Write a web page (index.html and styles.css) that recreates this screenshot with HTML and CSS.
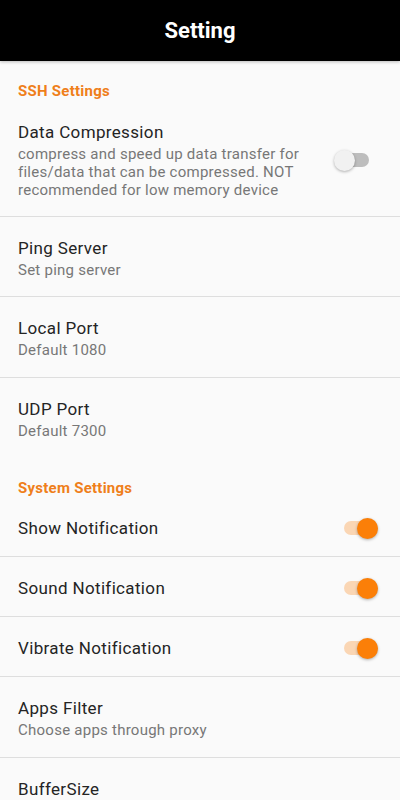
FILE: index.html
```html
<!DOCTYPE html>
<html>
<head>
    <title>Setting</title>
    <link rel="stylesheet" href="styles.css">
</head>
<body>
    <div class="toolbar">Setting</div>

    <div class="section-title first">SSH Settings</div>

    <div class="row divided">
        <div class="text wrap">
            <div class="title">Data Compression</div>
            <div class="summary">compress and speed up data transfer for files/data that can be compressed. NOT recommended for low memory device</div>
        </div>
        <div class="switch off"><span class="thumb"></span></div>
    </div>

    <div class="row divided">
        <div class="text">
            <div class="title">Ping Server</div>
            <div class="summary">Set ping server</div>
        </div>
    </div>

    <div class="row divided tall">
        <div class="text">
            <div class="title">Local Port</div>
            <div class="summary">Default 1080</div>
        </div>
    </div>

    <div class="row">
        <div class="text">
            <div class="title">UDP Port</div>
            <div class="summary">Default 7300</div>
        </div>
    </div>

    <div class="section-title">System Settings</div>

    <div class="row divided">
        <div class="text">
            <div class="title">Show Notification</div>
        </div>
        <div class="switch on"><span class="thumb"></span></div>
    </div>

    <div class="row divided">
        <div class="text">
            <div class="title">Sound Notification</div>
        </div>
        <div class="switch on"><span class="thumb"></span></div>
    </div>

    <div class="row divided">
        <div class="text">
            <div class="title">Vibrate Notification</div>
        </div>
        <div class="switch on"><span class="thumb"></span></div>
    </div>

    <div class="row divided tall">
        <div class="text">
            <div class="title">Apps Filter</div>
            <div class="summary">Choose apps through proxy</div>
        </div>
    </div>

    <div class="row">
        <div class="text">
            <div class="title">BufferSize</div>
        </div>
    </div>
</body>
</html>
```

FILE: styles.css
```css
body {
    margin: 0;
    font-family: Roboto, "Noto Sans", Arial, sans-serif;
    background-color: #fafafa;
    overflow: hidden;
}

.toolbar {
    height: 61px;
    background-color: #000;
    color: #fff;
    font-size: 22px;
    font-weight: bold;
    display: flex;
    align-items: center;
    justify-content: center;
    box-shadow: 0 1px 3px rgba(0, 0, 0, 0.25);
}

.section-title {
    padding: 21px 18px 0;
    font-size: 15px;
    line-height: 18px;
    font-weight: bold;
    letter-spacing: 0.25px;
    color: #ef7f1a;
}

.section-title.first {
    padding-top: 21px;
    padding-bottom: 1px;
}

.row {
    display: flex;
    align-items: center;
    padding: 20px 22px 18px 18px;
}

.row.divided {
    border-bottom: 1px solid #dedede;
    padding-bottom: 17px;
}

.row.divided.tall {
    padding-bottom: 18px;
}

.text {
    flex: 1;
}

.text.wrap {
    padding-right: 14px;
}

.title {
    font-size: 17px;
    line-height: 22px;
    letter-spacing: 0.35px;
    color: #242424;
}

.summary {
    margin-top: 2px;
    font-size: 15px;
    line-height: 18px;
    letter-spacing: 0.25px;
    color: #777;
}

.switch {
    width: 34px;
    height: 14px;
    border-radius: 7px;
    display: flex;
    align-items: center;
}

.thumb {
    width: 21px;
    height: 21px;
    border-radius: 50%;
    box-shadow: 0 1px 3px rgba(0, 0, 0, 0.3);
}

.switch.off {
    background-color: #bdbdbd;
    justify-content: flex-start;
    margin-right: 9px;
}

.switch.off .thumb {
    background-color: #f1f1f1;
    margin-left: -1px;
}

.switch.on {
    background-color: #fad6b4;
    justify-content: flex-end;
}

.switch.on .thumb {
    background-color: #fb7f08;
    margin-right: 0;
}
```
